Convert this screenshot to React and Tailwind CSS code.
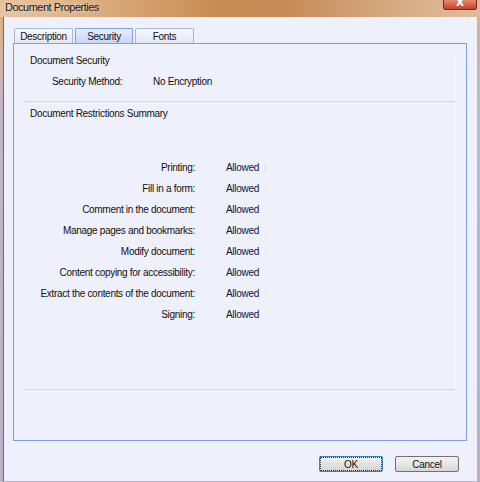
import React from "react";

const restrictions = [
  "Printing:",
  "Fill in a form:",
  "Comment in the document:",
  "Manage pages and bookmarks:",
  "Modify document:",
  "Content copying for accessibility:",
  "Extract the contents of the document:",
  "Signing:",
];

const Tab = ({ label, active }) => (
  <div
    className={
      active
        ? "w-[58px] h-[16px] -mb-px flex items-center justify-center rounded-t-[2px] border border-b-0 border-[#7f9de3] bg-[linear-gradient(#e6eefc,#c3d4f6)] text-[10px] text-[#111]"
        : "w-[59px] h-[15px] flex items-center justify-center rounded-t-[2px] border border-b-0 border-[#a9b8d9] bg-[linear-gradient(#f6f8fd,#e3e8f4)] text-[10px] text-[#111]"
    }
  >
    {label}
  </div>
);

const App = () => {
  return (
    <div
      className="w-[480px] h-[482px] flex flex-col bg-[linear-gradient(90deg,#e7c3a0_0%,#d8a676_25%,#c78c55_45%,#c68c58_60%,#d8ae88_85%,#e0bc9c_100%)] overflow-hidden tracking-[-0.3px]"
      style={{ fontFamily: '"Liberation Sans", Arial, sans-serif' }}
    >
      {/* title bar */}
      <div className="relative h-[17px] flex items-start pl-[5px]">
        <span className="text-[11px] leading-[15px] tracking-[-0.5px] text-[#1b1b1b] [text-shadow:0_0_6px_#f3e3d0]">
          Document Properties
        </span>
        <div className="absolute right-[3px] top-0 w-[34px] h-[10px] rounded-b-[3px] border border-t-0 border-[#7a2a1c] bg-[linear-gradient(#e48a72,#c8412a)] flex items-start justify-center">
          <svg width="10" height="6" viewBox="0 0 10 6">
            <path d="M2 -2 L8 6 M8 -2 L2 6" stroke="#fff" strokeWidth="2" />
          </svg>
        </div>
      </div>

      {/* frame + client area */}
      <div className="flex-1 flex pl-[3px] pr-[3px] pb-px bg-[linear-gradient(#d9b28c,#c4b6c6_20%,#bcb0c4)]">
        <div className="flex-1 flex flex-col border-l border-[#6e6476] bg-[#eef0fb] pl-[9px] pr-[10px]">
          {/* tabs */}
          <div className="flex items-end gap-[2px] pl-px mt-[11px] h-[15px]">
            <Tab label="Description" />
            <Tab label="Security" active />
            <Tab label="Fonts" />
          </div>

          {/* tab panel */}
          <div className="h-[398px] border border-[#7f9de3] bg-[#eef0fb] px-[10px] pt-[8px] flex flex-col">
            <div className="h-[50px] border-b border-[#d3d7e0] border-r border-r-[#f6f7fd] flex flex-col">
              <div className="text-[10px] leading-[16px] text-[#111] pl-[6px] pt-[1px]">
                Document Security
              </div>
              <div className="flex text-[10px] leading-[16px] text-[#111] mt-[5px]">
                <span className="w-[129px] pl-[28px]">Security Method:</span>
                <span>No Encryption</span>
              </div>
            </div>

            <div className="h-[288px] border-b border-[#d3d7e0] border-r border-r-[#f6f7fd] flex flex-col">
              <div className="text-[10px] leading-[16px] text-[#111] pl-[6px] mt-[4px]">
                Document Restrictions Summary
              </div>
              <div className="flex flex-col mt-[38px] gap-[5px]">
                {restrictions.map((r) => (
                  <div key={r} className="flex text-[10px] leading-[16px] text-[#111]">
                    <span className="w-[171px] text-right whitespace-nowrap">{r}</span>
                    <span className="ml-[31px] text-[#10153a]">Allowed</span>
                  </div>
                ))}
              </div>
            </div>
          </div>

          {/* buttons */}
          <div className="flex justify-end gap-[12px] mt-[15px] pr-[8px]">
            <button className="w-[64px] h-[16px] flex items-center justify-center border border-[#3c7fb1] rounded-[2px] bg-[linear-gradient(#f2f2f2,#e2e2e2_50%,#d4d4d4)] text-[10px] text-[#111] outline outline-1 -outline-offset-2 outline-dotted outline-[#333]">
              OK
            </button>
            <button className="w-[64px] h-[16px] flex items-center justify-center border border-[#707070] rounded-[2px] bg-[linear-gradient(#f2f2f2,#e6e6e6_50%,#d6d6d6)] text-[10px] text-[#111]">
              Cancel
            </button>
          </div>
        </div>
      </div>
    </div>
  );
};

export default App;
